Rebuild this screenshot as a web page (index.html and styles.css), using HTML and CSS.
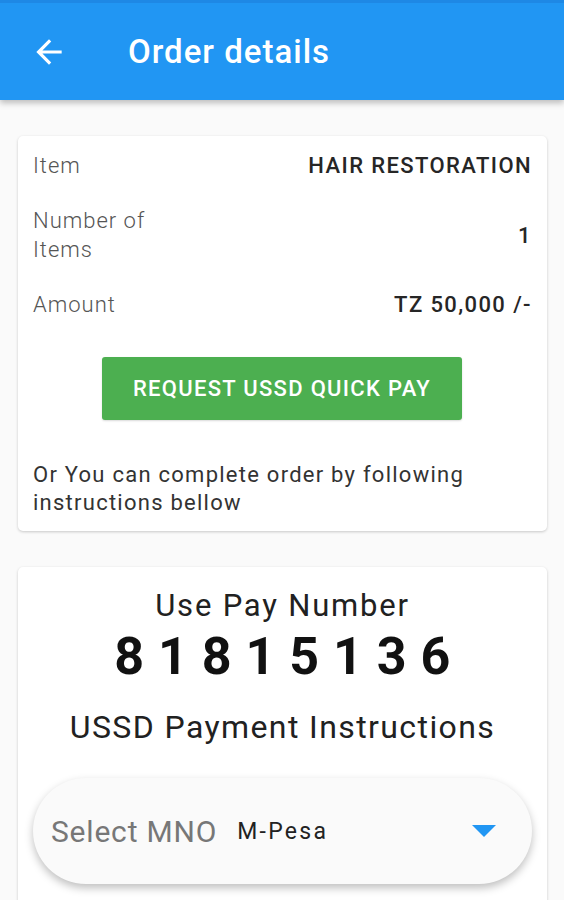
FILE: index.html
```html
<!DOCTYPE html>
<html lang="en">
<head>
    <meta charset="UTF-8">
    <meta name="viewport" content="width=device-width, initial-scale=1.0">
    <title>Order details</title>
    <link rel="stylesheet" href="styles.css">
</head>
<body>
    <header class="app-bar">
        <svg class="back-icon" viewBox="0 0 24 24"><path d="M20 11H7.83l5.59-5.59L12 4l-8 8 8 8 1.41-1.41L7.83 13H20v-2z"/></svg>
        <h1>Order details</h1>
    </header>

    <main class="content">
        <div class="card summary">
            <div class="row">
                <span class="label">Item</span>
                <span class="value">HAIR RESTORATION</span>
            </div>
            <div class="row">
                <span class="label">Number of Items</span>
                <span class="value">1</span>
            </div>
            <div class="row">
                <span class="label">Amount</span>
                <span class="value">TZ 50,000 /-</span>
            </div>

            <button class="quick-pay">Request USSD Quick Pay</button>

            <p class="note">Or You can complete order by following instructions bellow</p>
        </div>

        <div class="card instructions">
            <div class="pay-title">Use Pay Number</div>
            <div class="pay-number">8 1 8 1 5 1 3 6</div>
            <div class="ussd-title">USSD Payment Instructions</div>

            <div class="mno-select">
                <span class="mno-label">Select MNO</span>
                <span class="mno-value">M-Pesa</span>
                <span class="caret"></span>
            </div>
        </div>
    </main>
</body>
</html>
```

FILE: styles.css
```css
body {
    margin: 0;
    background: #fafafa;
    font-family: Roboto, 'Liberation Sans', sans-serif;
    color: #212121;
}
.app-bar {
    position: relative;
    height: 100px;
    background: #2196f3;
    border-top: 3px solid #1e88e5;
    box-sizing: border-box;
    display: flex;
    align-items: center;
    box-shadow: 0 3px 6px rgba(0,0,0,0.25);
}
.back-icon {
    width: 38px;
    height: 38px;
    fill: #fff;
    margin-left: 30px;
}
.app-bar h1 {
    margin: 0 0 0 60px;
    color: #fff;
    font-size: 33px;
    font-weight: 500;
    letter-spacing: 1px;
}
.content {
    padding: 36px 17px 0 18px;
}
.card {
    background: #fff;
    border-radius: 5px;
    box-shadow: 0 1px 3px rgba(0,0,0,0.2);
}
.summary {
    padding: 15px 15px 14px;
}
.row {
    display: flex;
    justify-content: space-between;
    align-items: center;
    font-size: 22px;
    line-height: 29px;
    margin-bottom: 26px;
}
.row:nth-child(3) {
    margin-bottom: 38px;
}
.label {
    width: 150px;
    font-weight: 300;
    color: #555;
    letter-spacing: 1px;
}
.value {
    font-weight: 500;
    color: #262626;
    letter-spacing: 1.4px;
}
.quick-pay {
    display: block;
    margin: 0 auto 0 69px;
    width: 360px;
    height: 63px;
    border: none;
    border-radius: 3px;
    background: #4caf50;
    color: #fff;
    font-family: inherit;
    font-size: 22px;
    font-weight: 500;
    letter-spacing: 1.3px;
    text-transform: uppercase;
    box-shadow: 0 1px 2px rgba(0,0,0,0.15);
}
.note {
    margin: 41px 0 0;
    font-size: 22px;
    line-height: 28px;
    letter-spacing: 1.25px;
    color: #333;
}
.instructions {
    margin-top: 36px;
    padding: 20px 15px 30px;
    text-align: center;
    border-radius: 5px 5px 0 0;
}
.pay-title {
    font-size: 31px;
    line-height: 38px;
    letter-spacing: 1.8px;
}
.pay-number {
    margin-top: 2px;
    font-size: 52px;
    font-weight: 700;
    line-height: 60px;
    letter-spacing: 0.5px;
    color: #111;
}
.ussd-title {
    margin-top: 20px;
    font-size: 32px;
    line-height: 40px;
    letter-spacing: 1.4px;
}
.mno-select {
    display: flex;
    align-items: center;
    margin-top: 31px;
    height: 106px;
    padding: 0 36px 0 18px;
    border-radius: 53px;
    background: #fafafa;
    box-shadow: 0 4px 8px rgba(0,0,0,0.25);
    text-align: left;
}
.mno-label {
    font-size: 30px;
    color: #777;
    letter-spacing: 0.8px;
}
.mno-value {
    margin-left: 20px;
    font-size: 23px;
    color: #222;
    letter-spacing: 2.3px;
    flex: 1;
}
.caret {
    width: 0;
    height: 0;
    border-left: 12px solid transparent;
    border-right: 12px solid transparent;
    border-top: 12px solid #2196f3;
}
```
